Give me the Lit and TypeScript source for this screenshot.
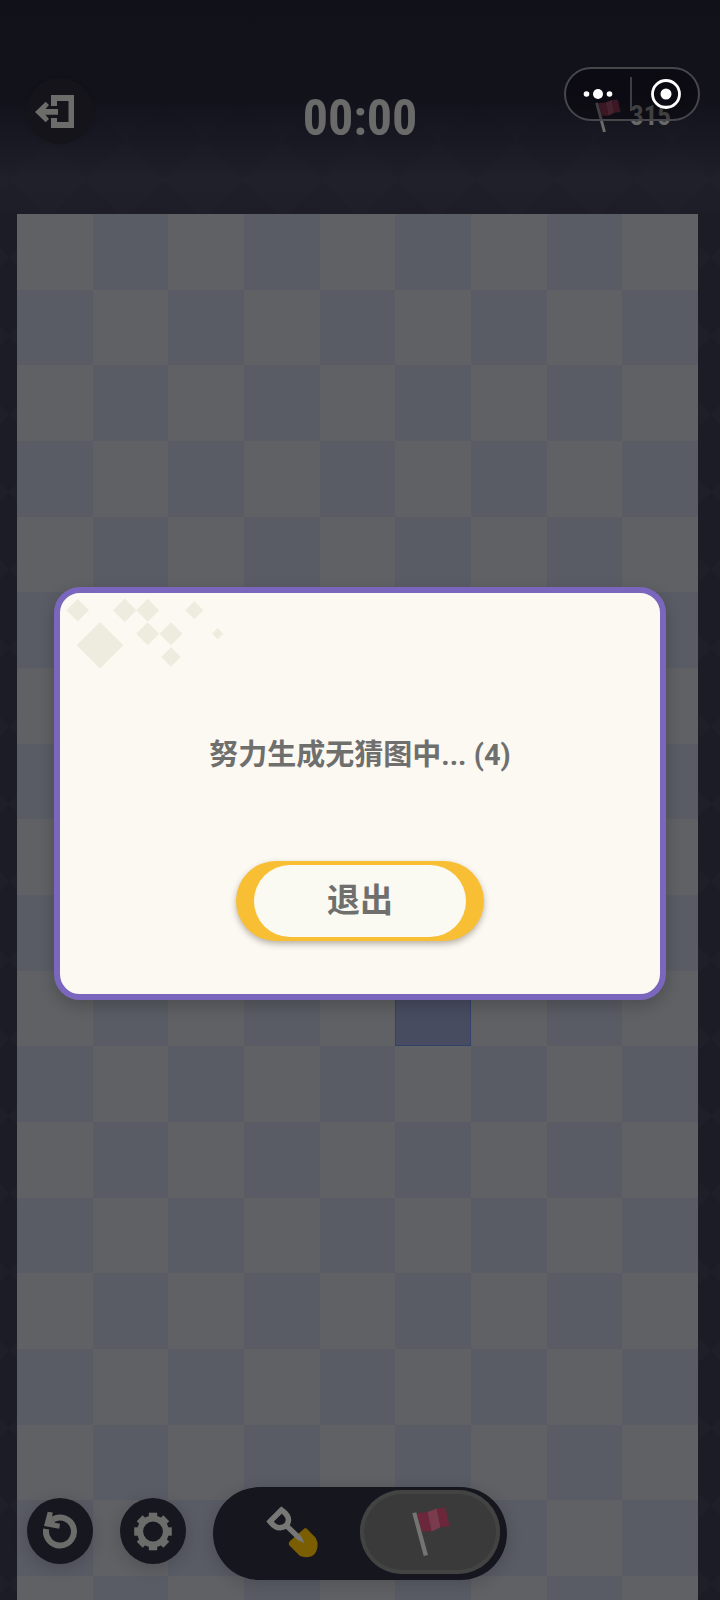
import { LitElement, html, svg, css } from "lit";
import { customElement, property, state } from "lit/decorators.js";
import { classMap } from "lit/directives/class-map.js";

const COLUMNS = 9;
const ROWS = 19;

const flagShape = svg`
  <path d="M203.7 26.3L214.5 25L218.7 44.5L208.7 44.3Z" fill="#6c273b"/>
  <path d="M214.5 25L224 21.5L227.5 40.3L218.7 44.5Z" fill="#7a3b4d"/>
  <path d="M224 21.5L232.4 20.7L236.5 39L227.5 40.3Z" fill="#6c273b"/>
  <path d="M199.3 26.3L203.2 25.3L215 68L210.7 69Z" fill="#747473"/>`;

@customElement("mine-board")
class MineBoard extends LitElement {
  @property({ type: Number }) selected = 95;

  static styles = css`
    :host {
      display: block;
      overflow: hidden;
    }
    .grid {
      display: grid;
      grid-template-columns: repeat(9, 1fr);
    }
    .cell {
      aspect-ratio: 1;
      background: #606164;
    }
    .cell.alt {
      background: #595c64;
    }
    .cell.selected {
      background: #484c60;
      border: 1px solid #34426a;
    }
  `;

  render() {
    return html`<div class="grid">
      ${Array.from({ length: COLUMNS * ROWS }, (_, i) => {
        const alt = (Math.floor(i / COLUMNS) + (i % COLUMNS)) % 2 === 1;
        return html`<div class=${classMap({ cell: true, alt, selected: i === this.selected })}></div>`;
      })}
    </div>`;
  }
}

@customElement("loading-dialog")
class LoadingDialog extends LitElement {
  @property({ type: Number }) seconds = 4;

  static styles = css`
    :host {
      display: block;
    }
    .dialog {
      position: relative;
      box-sizing: border-box;
      display: flex;
      flex-direction: column;
      align-items: center;
      gap: 86px;
      padding: 142px 24px 53px;
      border: 6px solid #7a66bc;
      border-radius: 26px;
      background: #fcf9f2;
      box-shadow: 0 6px 16px rgba(0, 0, 0, 0.2);
      color: #6f6f6e;
      font-family: "Roboto", "Noto Sans CJK SC", sans-serif;
    }
    .decor {
      position: absolute;
      top: 0;
      left: 0;
      width: 180px;
      height: 80px;
    }
    .message {
      margin: 0;
      font-size: 29px;
      font-weight: 700;
      line-height: 40px;
    }
    .leave {
      display: block;
      padding: 4px 18px;
      border: 0;
      border-radius: 40px;
      background: #f8be34;
      box-shadow: 0 3px 6px rgba(60, 50, 30, 0.35);
      color: inherit;
      font-family: inherit;
      font-size: 33px;
      font-weight: 700;
      line-height: 72px;
    }
    .face {
      display: block;
      min-width: 212px;
      border-radius: 36px;
      background: #fbfaf2;
    }
  `;

  render() {
    const diamonds = [
      [17.7, 17.3, 11.3], [64.7, 17.3, 11.7], [87.7, 17.3, 11.5],
      [134.3, 17.3, 9], [40, 52.3, 23.3], [87.7, 40.7, 11.5],
      [111, 40.7, 11.5], [111, 64, 9.7], [157.7, 40.7, 5.6],
    ];
    return html`<section class="dialog" role="dialog" aria-labelledby="message">
      <svg class="decor" viewBox="0 0 180 80" fill="#eeebdf" aria-hidden="true">
        ${diamonds.map(([x, y, r]) => svg`<path d="M${x} ${y - r}L${x + r} ${y}L${x} ${y + r}L${x - r} ${y}Z"/>`)}
      </svg>
      <p class="message" id="message">努力生成无猜图中... (${this.seconds})</p>
      <button class="leave" type="button"><span class="face">退出</span></button>
    </section>`;
  }
}

@customElement("app-root")
class AppRoot extends LitElement {
  @state() private tool = "flag";

  static styles = css`
    :host {
      display: block;
      font-family: "Roboto Condensed", "Roboto", sans-serif;
    }
    .stage {
      position: relative;
      display: flex;
      flex-direction: column;
      height: 100vh;
      overflow: hidden;
      background: #1c1c27;
    }
    .pattern {
      position: absolute;
      inset: 0;
      width: 100%;
      height: 100%;
    }
    header {
      position: relative;
      display: grid;
      grid-template-columns: 1fr auto 1fr;
      padding: 78px 27px 56px;
      background: linear-gradient(#11111a 0, #12121b 100px, rgba(25, 25, 35, 0.6) 150px, rgba(33, 33, 44, 0.6) 180px, rgba(30, 29, 40, 0.5) 214px);
    }
    mine-board {
      position: relative;
      flex: 1;
      min-height: 0;
      margin: 0 22px 0 17px;
    }
    .round {
      display: block;
      width: 66px;
      height: 66px;
      padding: 0;
      border: 0;
      border-radius: 50%;
      background: #171720;
      box-shadow: 0 4px 16px rgba(20, 20, 30, 0.2);
      color: #6c6c6a;
    }
    .round.exit {
      background: #14141a;
      box-shadow: 0 0 4px rgba(0, 0, 0, 0.1);
    }
    .round svg,
    .capsule svg,
    .tool svg {
      display: block;
    }
    .timer {
      color: #6a6a6a;
      font-size: 50px;
      font-weight: 700;
      line-height: 80px;
    }
    .counter {
      display: flex;
      justify-content: flex-end;
      align-items: center;
      gap: 9px;
      height: 76px;
      margin-right: 22px;
      color: #696967;
      font-size: 27px;
      font-weight: 700;
    }
    .capsule {
      position: absolute;
      top: 67px;
      right: 20px;
      z-index: 3;
      box-sizing: border-box;
      display: flex;
      align-items: center;
      width: 136px;
      height: 54px;
      border: 2px solid #46464b;
      border-radius: 27px;
      background: rgba(4, 3, 8, 0.4);
    }
    .capsule button {
      padding: 0;
      border: 0;
      background: none;
      color: #fff;
    }
    .capsule button + button {
      border-left: 2px solid #3d3d42;
    }
    .overlay {
      position: absolute;
      inset: 0;
      z-index: 2;
      display: grid;
      align-items: center;
      padding: 0 54px 13px;
    }
    .toolbar {
      position: absolute;
      left: 27px;
      bottom: 20px;
      z-index: 1;
      display: flex;
      align-items: center;
      gap: 27px;
    }
    .actions {
      display: flex;
      gap: 27px;
      padding-bottom: 6px;
    }
    .tools {
      display: flex;
      margin: 0;
      padding: 3px 7px 6px;
      border: 0;
      border-radius: 47px;
      background: #16161e;
      box-shadow: 0 4px 16px rgba(20, 20, 30, 0.2);
    }
    .tool {
      position: relative;
      display: block;
      border-radius: 42px;
    }
    .tool.on {
      background: #3a3a3b;
      box-shadow: inset 0 0 0 4px #434344;
    }
    .tool input {
      position: absolute;
      inset: 0;
      width: 100%;
      height: 100%;
      margin: 0;
      opacity: 0;
    }
  `;

  private renderTool(id: string, label: string, icon: unknown) {
    return html`<label class=${classMap({ tool: true, on: this.tool === id })}>
      <input type="radio" name="tool" aria-label=${label} .checked=${this.tool === id} @change=${() => (this.tool = id)} />
      ${icon}
    </label>`;
  }

  render() {
    return html`<main class="stage">
      <svg class="pattern" aria-hidden="true">
        <defs>
          <pattern id="diamonds" x="9" y="141" width="78" height="78" patternUnits="userSpaceOnUse">
            <path d="M39 0L78 39L39 78L0 39Z" fill="#ffffff" fill-opacity="0.012" />
          </pattern>
        </defs>
        <rect width="100%" height="100%" fill="url(#diamonds)" />
      </svg>

      <header>
        <button class="round exit" type="button" aria-label="退出">
          <svg width="66" height="66" viewBox="0 0 66 66" fill="currentColor">
            <path d="M24 17H47V50H24V40H30V44H41.5V23H30V28H24Z" />
            <path d="M8 34L18.7 23.7L22 27L18.5 31H31V36.8H18.5L22 41L18.7 44.3Z" />
          </svg>
        </button>
        <time class="timer">00:00</time>
        <div class="counter">
          <svg width="26" height="34" viewBox="199 20 38 50" opacity="0.9" aria-hidden="true">${flagShape}</svg>
          <span>315</span>
        </div>
      </header>

      <mine-board></mine-board>

      <div class="toolbar">
        <div class="actions">
          <button class="round" type="button" aria-label="重新开始">
            <svg width="66" height="66" viewBox="0 0 66 66">
              <path d="M19.2 31A14 14 0 1 0 26 21.4" fill="none" stroke="currentColor" stroke-width="6" />
              <path d="M20.7 13.7L25.8 14.6L25 19L28 24.8L33 25.7L32.3 30.7L17 28Z" fill="currentColor" />
            </svg>
          </button>
          <button class="round" type="button" aria-label="设置">
            <svg width="66" height="66" viewBox="0 0 66 66">
              <circle cx="33" cy="33.5" r="12.9" fill="none" stroke="currentColor" stroke-width="6" />
              ${[0, 45, 90, 135, 180, 225, 270, 315].map(
                (a) => svg`<rect x="28.8" y="14.7" width="8.4" height="7" fill="currentColor" transform="rotate(${a} 33 33.5)"/>`
              )}
            </svg>
          </button>
        </div>
        <fieldset class="tools" aria-label="工具">
          ${this.renderTool(
            "shovel",
            "铲子",
            html`<svg width="140" height="84" viewBox="7 3 140 84">
              <path d="M92 41Q94 41 96 44L102 50Q105 54 104.5 60Q103 68 98 69.5Q92 71 87 69L76 58Q75 56 77 54Z" fill="#7b5e02" />
              <path d="M68.5 23L57 34.5Q62 41 67 40.8Q75 40 75.5 33Q75.5 28 68.5 23Z" fill="none" stroke="#777776" stroke-width="5.5" />
              <path d="M71.5 40.5L75.5 37L88 49L91.5 56L84.5 53Z" fill="#777776" />
            </svg>`
          )}
          ${this.renderTool("flag", "旗子", html`<svg width="140" height="84" viewBox="147 3 140 84">${flagShape}</svg>`)}
        </fieldset>
      </div>

      <div class="overlay"><loading-dialog></loading-dialog></div>

      <div class="capsule">
        <button type="button" aria-label="更多">
          <svg width="64" height="34" viewBox="0 0 64 34" fill="currentColor">
            <circle cx="20.5" cy="17" r="2.8" />
            <circle cx="32" cy="17" r="5" />
            <circle cx="43.5" cy="17" r="2.8" />
          </svg>
        </button>
        <button type="button" aria-label="关闭">
          <svg width="66" height="34" viewBox="0 0 66 34">
            <circle cx="34" cy="17" r="13.5" fill="none" stroke="currentColor" stroke-width="2.8" />
            <circle cx="34" cy="17" r="5.5" fill="currentColor" />
          </svg>
        </button>
      </div>
    </main>`;
  }
}
